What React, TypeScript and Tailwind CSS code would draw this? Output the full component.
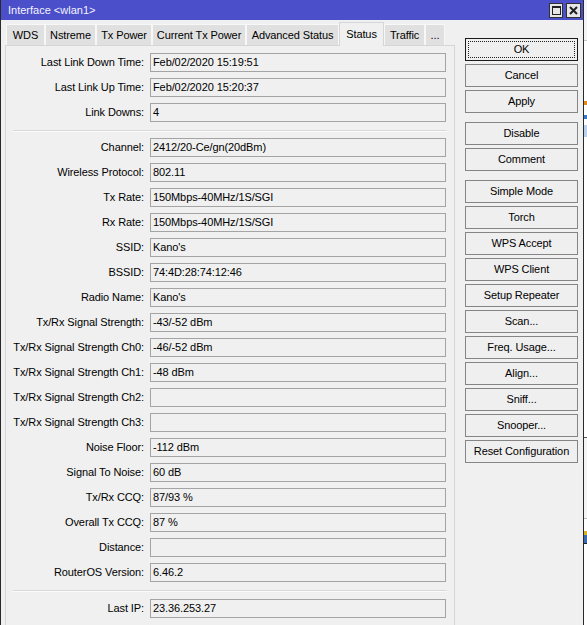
import React from "react";

type Row = { label: string; value: string } | { sep: true; extra?: boolean };

const rows: Row[] = [
  { label: "Last Link Down Time:", value: "Feb/02/2020 15:19:51" },
  { label: "Last Link Up Time:", value: "Feb/02/2020 15:20:37" },
  { label: "Link Downs:", value: "4" },
  { sep: true },
  { label: "Channel:", value: "2412/20-Ce/gn(20dBm)" },
  { label: "Wireless Protocol:", value: "802.11" },
  { label: "Tx Rate:", value: "150Mbps-40MHz/1S/SGI" },
  { label: "Rx Rate:", value: "150Mbps-40MHz/1S/SGI" },
  { label: "SSID:", value: "Kano's" },
  { label: "BSSID:", value: "74:4D:28:74:12:46" },
  { label: "Radio Name:", value: "Kano's" },
  { label: "Tx/Rx Signal Strength:", value: "-43/-52 dBm" },
  { label: "Tx/Rx Signal Strength Ch0:", value: "-46/-52 dBm" },
  { label: "Tx/Rx Signal Strength Ch1:", value: "-48 dBm" },
  { label: "Tx/Rx Signal Strength Ch2:", value: "" },
  { label: "Tx/Rx Signal Strength Ch3:", value: "" },
  { label: "Noise Floor:", value: "-112 dBm" },
  { label: "Signal To Noise:", value: "60 dB" },
  { label: "Tx/Rx CCQ:", value: "87/93 %" },
  { label: "Overall Tx CCQ:", value: "87 %" },
  { label: "Distance:", value: "" },
  { label: "RouterOS Version:", value: "6.46.2" },
  { sep: true, extra: true },
  { label: "Last IP:", value: "23.36.253.27" },
];

const tabs = [
  { name: "WDS", w: "w-[39px]" },
  { name: "Nstreme", w: "w-[51px]" },
  { name: "Tx Power", w: "w-[56px]" },
  { name: "Current Tx Power", w: "w-[94px]" },
  { name: "Advanced Status", w: "w-[93px]" },
  { name: "Status", w: "w-[45px]", active: true },
  { name: "Traffic", w: "w-[41px]" },
  { name: "...", w: "w-[20px]" },
];

const buttonGroups = [
  ["OK", "Cancel", "Apply"],
  ["Disable", "Comment"],
  [
    "Simple Mode",
    "Torch",
    "WPS Accept",
    "WPS Client",
    "Setup Repeater",
    "Scan...",
    "Freq. Usage...",
    "Align...",
    "Sniff...",
    "Snooper...",
    "Reset Configuration",
  ],
];

function Btn({ text }: { text: string }) {
  const ok = text === "OK";
  return (
    <div
      className={
        "relative h-[23px] w-[113px] flex items-center justify-center bg-[#efefef] text-black border " +
        (ok ? "border-[#1a1a1a]" : "border-[#858585]")
      }
    >
      {ok && (
        <div className="absolute inset-[2px] border border-dotted border-[#222]" />
      )}
      <span className="relative">{text}</span>
    </div>
  );
}

export default function App() {
  return (
    <div
      className="w-[587px] h-[625px] overflow-hidden flex bg-white text-[11px] leading-none text-black tracking-[-0.1px]"
      style={{ fontFamily: '"Liberation Sans", Arial, sans-serif' }}
    >
      {/* window */}
      <div className="w-[584px] h-[625px] shrink-0 flex flex-col border-x border-[#2a2a2a] bg-[#f0f0f0]">
        {/* title bar */}
        <div className="h-[20px] shrink-0 bg-[#4b4fca] flex items-center pl-[7px] pr-[2px]">
          <span className="text-[#f4f4ff] text-[11px] tracking-normal">Interface &lt;wlan1&gt;</span>
          <div className="ml-auto flex gap-[3px] items-center">
            <div className="w-[14px] h-[15px] bg-[#e6e6e6] border border-[#303030] flex items-center justify-center">
              <div className="w-[9px] h-[9px] border border-[#202020] border-t-2" />
            </div>
            <div className="w-[15px] h-[15px] bg-[#e6e6e6] border border-[#303030] flex items-center justify-center">
              <svg width="9" height="9" viewBox="0 0 9 9">
                <path d="M1 1 L8 8 M8 1 L1 8" stroke="#202020" strokeWidth="2" />
              </svg>
            </div>
          </div>
        </div>

        {/* body */}
        <div className="flex flex-1 min-h-0">
          {/* left: tabs + panel */}
          <div className="flex flex-col w-[450px] ml-[4px] pt-[2px]">
            <div className="flex h-[24px] pl-[1px] items-end">
              {tabs.map((t) =>
                t.active ? (
                  <div
                    key={t.name}
                    className={
                      t.w +
                      " h-[24px] bg-[#f0f0f0] border border-b-0 border-[#d6d6d6] flex items-center justify-center relative z-10 -mb-[1px] pb-[1px]"
                    }
                  >
                    {t.name}
                  </div>
                ) : (
                  <div
                    key={t.name}
                    className={
                      t.w +
                      " h-[21px] bg-[#e0e0e0] border border-[#f7f7f7] border-b-0 flex items-center justify-center"
                    }
                  >
                    {t.name}
                  </div>
                )
              )}
            </div>
            <div className="flex-1 border border-[#d6d6d6] border-b-0 pt-[7px] pr-[7px] flex flex-col gap-[6px]">
              {rows.map((r, i) =>
                "sep" in r ? (
                  <div key={i} className={"pt-[2px] ml-[7px] " + (r.extra ? "pb-[1px]" : "")}>
                    <div className="h-[1px] bg-[#d9d9d9]" />
                    <div className="h-[1px] bg-[#fbfbfb]" />
                  </div>
                ) : (
                  <div key={i} className="flex items-center h-[19px] shrink-0">
                    <div className="w-[138px] text-right whitespace-nowrap">{r.label}</div>
                    <div className="ml-[6px] w-[296px] h-[19px] border border-[#a4a4a4] bg-[#f0f0f0] flex items-center pl-[2px] whitespace-nowrap">
                      {r.value}
                    </div>
                  </div>
                )
              )}
              <div className="flex items-center h-[19px] shrink-0">
                <div className="w-[138px]" />
                <div className="ml-[7px] w-[13px] h-[13px] border border-[#7a7a7a] bg-white" />
              </div>
            </div>
          </div>

          {/* right: buttons */}
          <div className="ml-[10px] pt-[18px] flex flex-col">
            {buttonGroups.map((g, gi) => (
              <div key={gi} className={"flex flex-col gap-[3px] " + (gi > 0 ? "mt-[9px]" : "")}>
                {g.map((b) => (
                  <Btn key={b} text={b} />
                ))}
              </div>
            ))}
          </div>
        </div>
      </div>

      {/* background window behind */}
      <div className="flex-1 flex flex-col bg-[#f4f4f4]">
        <div className="h-[20px] bg-[#f4f4f4]" />
        <div className="h-[1px] bg-[#c8c8c8] mt-[20px]" />
        <div className="h-[60px] bg-white" />
        <div className="h-[4px] bg-[#e08a1c]" />
        <div className="h-[10px] bg-white" />
        <div className="h-[4px] bg-[#3a78c8]" />
        <div className="h-[6px] bg-white" />
        <div className="h-[12px] bg-[#b9d3ef]" />
        <div className="h-[300px] bg-white" />
        <div className="h-[1px] bg-[#555]" />
        <div className="h-[80px] bg-[#f4f4f4]" />
        <div className="h-[1px] bg-[#bcbcbc]" />
        <div className="h-[12px] bg-white" />
        <div className="h-[4px] bg-[#d8b030]" />
        <div className="h-[8px] bg-[#3a6ab0]" />
        <div className="h-[1px] bg-[#222]" />
        <div className="flex-1 bg-white" />
      </div>
    </div>
  );
}
